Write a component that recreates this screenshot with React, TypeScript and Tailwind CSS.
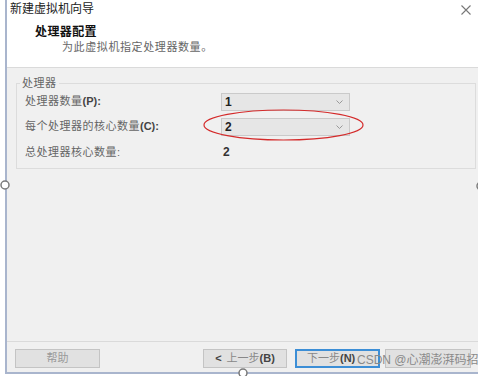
export default function App() {
  const font = "font-['Liberation_Sans','Noto_Sans_CJK_SC',sans-serif]";
  return (
    <div className={`relative w-[478px] h-[376px] bg-white overflow-hidden ${font}`}>
      <div className="ml-[5px] h-[374px] flex flex-col border-l-2 border-b-2 border-[#a9b5cd]">
        {/* header */}
        <div className="h-[68px] bg-white border-b border-[#dadada] flex flex-col">
          <div className="flex items-center justify-between h-[18px] pl-[3px] pr-[6px]">
            <span className="text-[12px] leading-[14px] text-[#222]">新建虚拟机向导</span>
            <svg width="12" height="12" viewBox="0 0 12 12" className="mt-[2px]">
              <path d="M1.5 1.5 L10.5 10.5 M10.5 1.5 L1.5 10.5" stroke="#777" strokeWidth="1.1" />
            </svg>
          </div>
          <div className="pl-[28px] pt-[7px] text-[12px] leading-[14px] font-bold text-[#111] tracking-[0.4px]">
            处理器配置
          </div>
          <div className="pl-[55px] pt-[1px] text-[11px] leading-[14px] text-[#666] tracking-[0.6px]">
            为此虚拟机指定处理器数量。
          </div>
        </div>

        {/* body */}
        <div className="flex-1 bg-[#f0f0f0] pl-[9px] pr-[2px] pt-[9px]">
          <fieldset className="border border-[#dcdcdc] px-[8px] pb-[3px]">
            <legend className="-ml-[5px] px-[2px] text-[11px] leading-[12px] text-[#666] tracking-[0.5px]">处理器</legend>
            <div className="flex items-center h-[25px]">
              <span className="w-[196px] text-[11px] text-[#666] tracking-[0.5px]">
                处理器数量<span className="font-bold text-[#444] tracking-normal">(P):</span>
              </span>
              <Select value="1" />
            </div>
            <div className="flex items-center h-[25px]">
              <span className="w-[196px] text-[11px] text-[#666] tracking-[0.5px]">
                每个处理器的核心数量<span className="font-bold text-[#444] tracking-normal">(C):</span>
              </span>
              <Select value="2" />
            </div>
            <div className="flex items-center h-[26px]">
              <span className="w-[196px] text-[11px] text-[#666] tracking-[0.5px]">总处理器核心数量:</span>
              <span className="pl-[2px] text-[12px] font-bold text-[#333]">2</span>
            </div>
          </fieldset>
        </div>

        {/* footer */}
        <div className="h-[31px] bg-[#f0f0f0] border-t border-[#dadada] pt-[7px] pl-[8px] flex items-start">
          <Btn w="w-[85px]" className="text-[#999]">帮助</Btn>
          <Btn w="w-[84px] ml-[103px]">
            <span className="font-bold text-[#444] mr-[5px]">&lt;</span>上一步<span className="font-bold text-[#444]">(B)</span>
          </Btn>
          <Btn w="w-[85px] ml-[8px]" focus className="justify-start pl-[10px]">
            下一步<span className="font-bold text-[#444]">(N)</span>
          </Btn>
          <Btn w="w-[86px] ml-[5px]">{""}</Btn>
        </div>
      </div>

      {/* watermark */}
      <div className="absolute left-[357px] top-[351px] text-[12px] leading-[18px] text-[#8a8a8a] whitespace-nowrap">
        CSDN @心潮澎湃码招
      </div>

      {/* red annotation + editor handles */}
      <svg className="absolute left-0 top-0 pointer-events-none" width="478" height="376">
        <ellipse cx="283.5" cy="125" rx="79.5" ry="15" fill="none" stroke="#d42a2a" strokeWidth="1.2" />
        <circle cx="5" cy="185" r="4" fill="white" stroke="#7a7a7a" strokeWidth="1.5" />
        <circle cx="481" cy="186" r="4" fill="white" stroke="#7a7a7a" strokeWidth="1.5" />
        <circle cx="243" cy="373" r="4" fill="white" stroke="#7a7a7a" strokeWidth="1.5" />
      </svg>
    </div>
  );
}

function Select({ value }: { value: string }) {
  return (
    <div className="w-[129px] h-[18px] bg-[#e6e6e6] border border-[#cacaca] flex items-center justify-between pl-[3px] pr-[6px]">
      <span className="text-[12px] font-bold text-[#222]">{value}</span>
      <svg width="7" height="4" viewBox="0 0 7 4">
        <path d="M0.5 0.5 L3.5 3.5 L6.5 0.5" fill="none" stroke="#999" strokeWidth="1" />
      </svg>
    </div>
  );
}

function Btn({
  children,
  w,
  focus,
  className = "",
}: {
  children: React.ReactNode;
  w: string;
  focus?: boolean;
  className?: string;
}) {
  return (
    <div
      className={`${w} h-[19px] flex items-center justify-center bg-[#e1e1e1] text-[11px] text-[#888] whitespace-nowrap ${
        focus ? "border-2 border-[#3c8ed6]" : "border border-[#c4c4c4]"
      } ${className}`}
    >
      {children}
    </div>
  );
}
